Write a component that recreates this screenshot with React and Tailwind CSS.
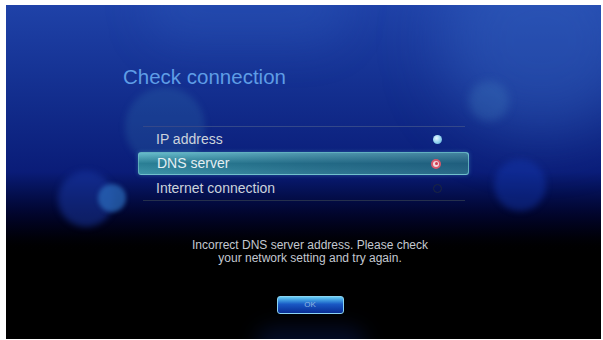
import React from 'react'

const rows = [
  { label: 'IP address', state: 'ok' },
  { label: 'DNS server', state: 'fail', active: true },
  { label: 'Internet connection', state: 'idle' },
]

function Dot({ state }) {
  if (state === 'ok') {
    return <span className="block w-[9px] h-[9px] rounded-full bg-[radial-gradient(circle_at_40%_35%,#e8f8ff,#8fd0ee_55%,#4d9cc8)]" />
  }
  if (state === 'fail') {
    return (
      <span className="flex items-center justify-center w-[10px] h-[10px] rounded-full bg-[#f0d8dc] border-[2px] border-[#d8566a]">
        <span className="block w-[3px] h-[3px] rounded-full bg-[#d03a50]" />
      </span>
    )
  }
  return <span className="block w-[9px] h-[9px] rounded-full border border-[#1c2640]" />
}

export default function App() {
  return (
    <div className="w-[603px] h-[340px] bg-white pt-[5px] pl-[6px] pr-[2px] pb-[1px] font-['Liberation_Sans',Arial,sans-serif]">
      <div className="relative w-full h-full overflow-hidden bg-linear-to-b from-[#1f42a8] via-[#0a1c78] via-50% to-black to-[76%]">
        {/* bokeh */}
        <div className="absolute -right-[40px] -top-[60px] w-[200px] h-[190px] rounded-full bg-[#3a6cc8]/40 blur-[30px]" />
        <div className="absolute left-[140px] -top-[30px] w-[200px] h-[70px] rounded-full bg-[#3060c0]/25 blur-[20px]" />
        <div className="absolute left-[119px] top-[82px] w-[80px] h-[80px] rounded-full bg-[#3a8ab8]/20 blur-[3px]" />
        <div className="absolute left-[463px] top-[76px] w-[40px] h-[40px] rounded-full bg-[#4a90c8]/25 blur-[4px]" />
        <div className="absolute left-[52px] top-[166px] w-[56px] h-[56px] rounded-full bg-[#1a3aa8]/50 blur-[3px]" />
        <div className="absolute left-[92px] top-[179px] w-[28px] h-[28px] rounded-full bg-[#2a68b8]/75 blur-[2px]" />
        <div className="absolute left-[488px] top-[154px] w-[52px] h-[52px] rounded-full bg-[#1438b0]/45 blur-[3px]" />
        <div className="absolute left-[250px] top-[322px] w-[110px] h-[36px] rounded-full bg-[#10309a]/25 blur-[10px]" />

        <div className="relative flex flex-col">
          <h1 className="pl-[117px] pt-[60px] text-[20.5px] leading-[24px] text-[#5f9de6]">Check connection</h1>

          <div className="ml-[137px] mt-[37px] w-[322px] border-t border-b border-t-[#34488a] border-b-[#25304c]">
            {rows.map((r) =>
              r.active ? (
                <div
                  key={r.label}
                  className="relative -ml-[5px] -mr-[4px] h-[23px] my-[1px] flex items-center justify-between pl-[18px] pr-[27px] rounded-[3px] border border-[#7cc4d0]/60 bg-linear-to-b from-[#66bccb] via-[#2a7f95] to-[#3d93a8] shadow-[0_0_4px_rgba(80,170,200,0.4)]"
                >
                  <div className="absolute inset-0 rounded-[3px] bg-linear-to-r from-transparent via-[#0e2c5a]/25 to-[#0e2c5a]/40" />
                  <span className="relative text-[14px] text-[#e4eef2]">{r.label}</span>
                  <span className="relative"><Dot state={r.state} /></span>
                </div>
              ) : (
                <div key={r.label} className="h-[24px] flex items-center justify-between pl-[13px] pr-[23px]">
                  <span className="text-[14px] text-[#ccd3dc]">{r.label}</span>
                  <Dot state={r.state} />
                </div>
              )
            )}
          </div>

          <div className="pl-[13px] mt-[38px] text-center text-[12px] leading-[12.5px] text-[#c4c8d0]">
            <p>Incorrect DNS server address. Please check</p>
            <p>your network setting and try again.</p>
          </div>

          <div className="pl-[13px] mt-[32px] flex justify-center">
            <button className="w-[67px] h-[18px] rounded-[3px] border border-[#8ad4f4] bg-linear-to-b from-[#66cdf4] via-[#1a58c4] via-45% to-[#0a2c94] text-[8px] text-[#8fb6e0]">
              OK
            </button>
          </div>
        </div>
      </div>
    </div>
  )
}
